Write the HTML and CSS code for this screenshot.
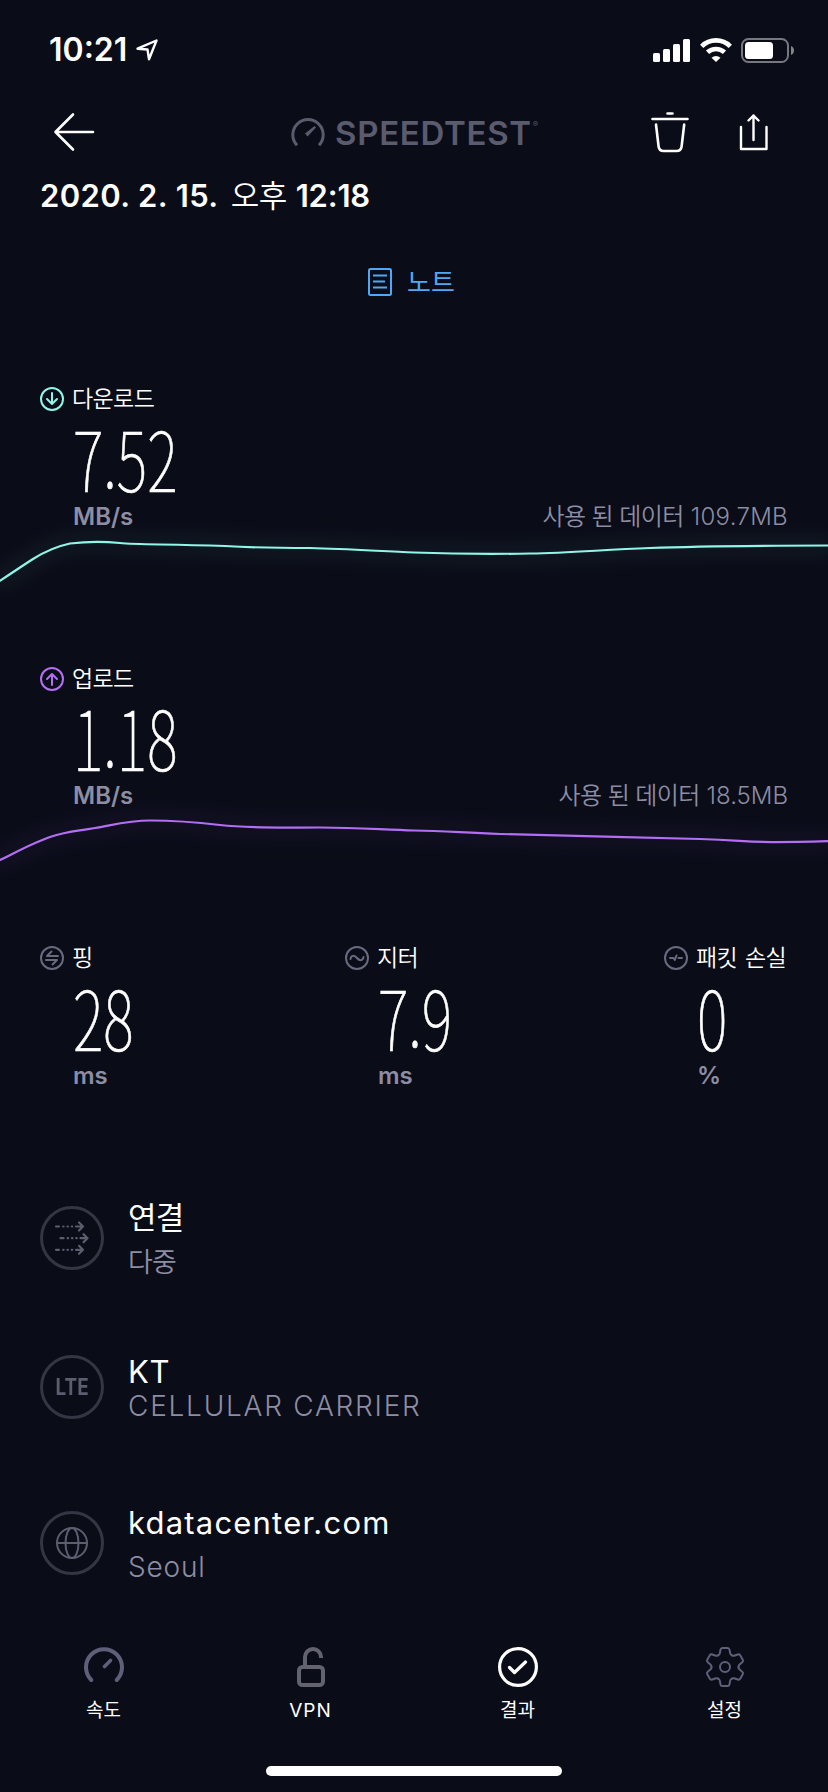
FILE: index.html
```html
<!DOCTYPE html>
<html lang="ko">
<head>
<meta charset="utf-8">
<meta name="viewport" content="width=device-width">
<title>Speedtest</title>
<link rel="stylesheet" href="styles.css">
</head>
<body>
<div class="screen">
  <header class="status">
    <div class="status-left">
      <span class="clock">10:21</span>
      <svg class="locate" width="24" height="24" viewBox="0 0 24 24"><path d="M2.500 10.700L21.500 2.500L14 21.300L12.500 11.500Z" fill="none" stroke="#fff" stroke-width="2.400" stroke-linejoin="round"/></svg>
    </div>
    <svg width="144" height="28" viewBox="0 0 144 28">
      <g fill="#fff">
        <rect x="1" y="17" width="7" height="9" rx="1.500"/><rect x="11" y="13" width="7" height="13" rx="1.500"/><rect x="21" y="8" width="7" height="18" rx="1.500"/><rect x="31" y="3" width="7" height="23" rx="1.500"/>
        <path d="M64 26l-4.500-4.300a6.500 6.500 0 0 1 9 0z"/>
        <rect x="93" y="6" width="28" height="17" rx="3.500"/>
      </g>
      <g fill="none" stroke="#fff" stroke-width="4.600"><path d="M49.700 10.300a20.300 20.300 0 0 1 28.600 0"/><path d="M55.500 16.300a12.500 12.500 0 0 1 17 0"/></g>
      <rect x="90" y="3" width="46" height="23" rx="6.500" fill="none" stroke="#77787f" stroke-width="2"/>
      <path d="M139 10c4 1.500 4 7.500 0 9z" fill="#84858b"/>
    </svg>
  </header>

  <nav class="topbar">
    <svg width="42" height="42" viewBox="0 0 42 42" fill="none" stroke="#fff" stroke-width="2.600" stroke-linecap="round" stroke-linejoin="round"><path d="M20 3.500L2.500 21L20 38.500M2.500 21H40"/></svg>
    <div class="brand">
      <svg width="36" height="32" viewBox="0 0 36 32" fill="none" stroke="#5b5b6e" stroke-width="3"><path d="M7 28.300a15.200 15.200 0 1 1 22 0"/><path d="M15 16.500L24.500 9l1.500 1.500L17.500 19.500z" fill="#5b5b6e" stroke="none"/></svg>
      <span class="wordmark">SPEEDTEST</span><span class="reg">®</span>
    </div>
    <div class="actions">
      <svg width="40" height="42" viewBox="0 0 40 42" fill="none" stroke="#fff" stroke-width="2.600" stroke-linecap="round"><path d="M17.500 2.500h5M2.500 8h35M6 13.500l2.600 22q.6 4.500 5 4.500h13q4.400 0 5-4.500l2.600-22"/></svg>
      <svg width="30" height="38" viewBox="0 0 30 38" fill="none" stroke="#fff" stroke-width="2.400" stroke-linecap="round" stroke-linejoin="round"><path d="M2 14v22h25.500V14M14.500 27V2.500M9.500 7.500l5-5 5 5"/></svg>
    </div>
  </nav>

  <h1 class="date"><span class="d1">2020. 2. 15.</span><span class="ampm">오후</span><span class="d2">12:18</span></h1>

  <div class="note">
    <svg width="24" height="28" viewBox="0 0 24 28" fill="none" stroke="#4fa8f5" stroke-width="2"><rect x="1" y="1" width="22" height="26" rx="1.500"/><path d="M5 7.500h14M5 13.500h12M5 19.500h14"/></svg>
    <span>노트</span>
  </div>

  <section class="metric download">
    <div class="label"><svg class="ico" viewBox="0 0 24 24" stroke="#8ff6e8"><circle cx="12" cy="12" r="11"/><path d="M12 6v10.500M7 12l5 5 5-5"/></svg><span>다운로드</span></div>
    <div class="value"><span>7<i class="dot">.</i>52</span></div>
    <div class="foot"><span class="unit">MB/s</span><span class="used"><b>사용 된 데이터</b> 109.7MB</span></div>
    <svg class="chart" width="828" height="80" viewBox="0 526 828 80" fill="none" stroke="#8ff6e8">
      <path class="glow" d="M-5 584C12 573 22 566 33 559S56 546.500 70 543.500C90 541 105 541.500 120 543S150 544 225 546C250 547.500 270 548 310 548C350 549 385 551.500 414 552.500S490 554.200 530 553.500S600 550 650 548S730 545.600 833 545.500"/>
      <path d="M-5 584C12 573 22 566 33 559S56 546.500 70 543.500C90 541 105 541.500 120 543S150 544 225 546C250 547.500 270 548 310 548C350 549 385 551.500 414 552.500S490 554.200 530 553.500S600 550 650 548S730 545.600 833 545.500"/>
    </svg>
  </section>

  <section class="metric upload">
    <div class="label"><svg class="ico" viewBox="0 0 24 24" stroke="#b46ef5"><circle cx="12" cy="12" r="11"/><path d="M12 18V7.500M7 12l5-5 5 5"/></svg><span>업로드</span></div>
    <div class="value"><span>1<i class="dot">.</i>18</span></div>
    <div class="foot"><span class="unit">MB/s</span><span class="used"><b>사용 된 데이터</b> 18.5MB</span></div>
    <svg class="chart" width="828" height="80" viewBox="0 805 828 80" fill="none" stroke="#b46ef5">
      <path class="glow" d="M-5 862.500C12 854.500 32 843 50 837S75 831.500 95 828S130 820.500 150 820.500S190 821.500 220 825S280 827.500 320 827.500S385 830 414 830.500S460 832.500 500 834S640 837 700 839S745 843.500 833 841"/>
      <path d="M-5 862.500C12 854.500 32 843 50 837S75 831.500 95 828S130 820.500 150 820.500S190 821.500 220 825S280 827.500 320 827.500S385 830 414 830.500S460 832.500 500 834S640 837 700 839S745 843.500 833 841"/>
    </svg>
  </section>

  <section class="trio">
    <div class="metric">
      <div class="label"><svg class="ico" viewBox="0 0 24 24" stroke="#696a7f"><circle cx="12" cy="12" r="11"/><path d="M18 10H7l4.500-4.500M6 14h11l-4.500 4.500"/></svg><span>핑</span></div>
      <div class="value"><span>28</span></div>
      <div class="foot"><span class="unit">ms</span></div>
    </div>
    <div class="metric">
      <div class="label"><svg class="ico" viewBox="0 0 24 24" stroke="#696a7f"><circle cx="12" cy="12" r="11"/><path d="M5.500 13c.5-4 4-4 6.500-1s6 3 6.500-1"/></svg><span>지터</span></div>
      <div class="value"><span>7<i class="dot">.</i>9</span></div>
      <div class="foot"><span class="unit">ms</span></div>
    </div>
    <div class="metric">
      <div class="label"><svg class="ico" viewBox="0 0 24 24" stroke="#696a7f"><circle cx="12" cy="12" r="11"/><path d="M6 12h3.500l1.300 2 1.700-4.500M14.500 12H18"/></svg><span>패킷 손실</span></div>
      <div class="value"><span>0</span></div>
      <div class="foot"><span class="unit pct">%</span></div>
    </div>
  </section>

  <section class="details">
    <div class="row conn">
      <div class="ring"><svg width="36" height="36" viewBox="-18 -18 36 36" fill="none" stroke="#5c5d6e" stroke-width="2.200" stroke-linecap="round" stroke-linejoin="round">
        <g id="arrow"><path d="M-16 -11.500h3M-8.800 -11.500h.4M-4.500 -11.500h.4M-.2 -11.500h.4M4 -11.500h7M7 -15.500l4 4-4 4"/></g>
        <use href="#arrow" x="4.500" y="11.700"/><use href="#arrow" y="23.300"/>
      </svg></div>
      <div class="info"><div class="title">연결</div><div class="sub">다중</div></div>
    </div>
    <div class="row carrier">
      <div class="ring"><span class="lte">LTE</span></div>
      <div class="info"><div class="title">KT</div><div class="sub">CELLULAR CARRIER</div></div>
    </div>
    <div class="row server">
      <div class="ring"><svg width="32" height="32" viewBox="0 0 32 32" fill="none" stroke="#5c5d6e" stroke-width="2"><circle cx="16" cy="16" r="15"/><ellipse cx="16" cy="16" rx="6.500" ry="15"/><path d="M1 16h30"/></svg></div>
      <div class="info"><div class="title">kdatacenter.com</div><div class="sub">Seoul</div></div>
    </div>
  </section>

  <nav class="tabs">
    <div class="tab"><svg width="40" height="40" viewBox="0 0 40 40" fill="none" stroke="#5f5f7a" stroke-width="4" stroke-linecap="round"><path d="M7.300 33a18 18 0 1 1 25.400 0"/><path d="M20.500 19.500l6-6" stroke-width="3.600"/></svg><span>속도</span></div>
    <div class="tab"><svg width="40" height="40" viewBox="0 0 40 40" fill="none" stroke="#63636f" stroke-width="4"><rect x="8" y="20" width="24" height="18" rx="3.500"/><path d="M14 20v-10a8 8 0 0 1 16 0v1"/></svg><span class="latin">VPN</span></div>
    <div class="tab"><svg width="40" height="40" viewBox="0 0 40 40" fill="none" stroke="#fff" stroke-width="3.200" stroke-linecap="round" stroke-linejoin="round"><circle cx="20" cy="20" r="18.400"/><path d="M11.500 20.500l5 5 11-10.500"/></svg><span>결과</span></div>
    <div class="tab"><svg width="40" height="40" viewBox="-20 -20 40 40" fill="none" stroke="#5f5f7a" stroke-width="2" stroke-linecap="round"><g id="cog"><path d="M-6.800 -11.800L-6.300 -12Q-5.400 -12.500 -5.200 -13.600L-4.500 -17.300Q-4.200 -19 -2.600 -19H2.600Q4.200 -19 4.500 -17.300L5.200 -13.600Q5.400 -12.500 6.300 -12L6.800 -11.800"/></g><use href="#cog" transform="rotate(60)"/><use href="#cog" transform="rotate(120)"/><use href="#cog" transform="rotate(180)"/><use href="#cog" transform="rotate(240)"/><use href="#cog" transform="rotate(300)"/><circle r="5"/></svg><span>설정</span></div>
  </nav>
  <div class="home"></div>
</div>
</body>
</html>
```
FILE: styles.css
```css
* { box-sizing: border-box; }
body { margin: 0; background: #0a0c18; }
svg { display: block; flex: none; overflow: visible; }
.screen {
  width: 828px;
  height: 1792px;
  overflow: hidden;
  display: flex;
  flex-direction: column;
  background: #0a0c18;
  color: #fff;
  font-family: Inter, "Noto Sans CJK KR", sans-serif;
  white-space: nowrap;
}
.status {
  height: 99px;
  padding: 0 32px 0 49px;
  display: flex;
  align-items: center;
  justify-content: space-between;
}
.status-left { display: flex; align-items: center; gap: 8px; }
.clock { width: 78px; font-size: 32px; font-weight: 600; line-height: 40px; letter-spacing: 0; }

.topbar {
  height: 66px;
  padding: 0 59px 0 53px;
  display: grid;
  grid-template-columns: 237px 1fr auto;
  align-items: center;
}
.brand { display: flex; align-items: center; color: #5b5b6e; padding-top: 2px; }
.wordmark { margin-left: 9px; font-size: 33px; font-weight: 600; line-height: 36px; letter-spacing: 0.7px; }
.reg { font-size: 8px; line-height: 8px; align-self: flex-start; margin: 5px 0 0 1px; }
.actions { display: flex; align-items: center; gap: 49px; }

.date {
  margin: 0;
  height: 62px;
  padding-left: 40px;
  display: flex;
  font-size: 31px;
  font-weight: 600;
  line-height: 62px;
  letter-spacing: 0.4px;
}
.ampm { font-weight: 350; font-size: 31px; margin: 0 9px 0 12px; letter-spacing: -0.5px; }
.d2 { letter-spacing: -0.2px; }

.note {
  height: 110px;
  padding-left: 368px;
  display: flex;
  align-items: center;
  gap: 15px;
  color: #4fa8f5;
  font-size: 26px;
}
.note span { padding-bottom: 4px; font-weight: 400; }

.metric { padding-top: 50px; }
.download { height: 280px; }
.upload { height: 279px; }
.download, .upload { flex: none; }
.label { height: 24px; padding-left: 40px; display: flex; align-items: center; gap: 8px; font-size: 23px; font-weight: 350; letter-spacing: -0.6px; word-spacing: 2px; line-height: 24px; }
.ico { width: 24px; height: 24px; fill: none; stroke-width: 2; stroke-linecap: round; stroke-linejoin: round; }
.value { height: 92px; margin-top: 4px; padding-left: 73px; font-family: "Noto Sans CJK KR", sans-serif; font-weight: 100; font-size: 82px; line-height: 92px; }
.upload .value { margin-top: 3px; }
.value span { display: inline-block; transform: translateY(-4px) scaleX(0.71); transform-origin: 0 50%; -webkit-text-stroke: 0.7px #fff; }
.dot { font-style: normal; }
.foot { height: 19px; padding: 0 40px 0 73px; display: flex; justify-content: space-between; line-height: 19px; font-size: 24px; color: #8d8da3; }
.unit { font-weight: 600; }
.used { font-weight: 350; }
.used b { font-weight: 350; letter-spacing: -0.6px; }
.download .used { letter-spacing: 0.3px; }
.chart { stroke-width: 2.2; }
.glow { stroke-width: 24; opacity: 0.045; filter: blur(9px); }

.trio { height: 297px; display: flex; flex: none; }
.trio .metric:nth-child(1) { width: 305px; }
.trio .metric:nth-child(2) { width: 319px; }
.trio .foot { padding-right: 0; }

.row { height: 90px; padding-left: 40px; display: flex; align-items: center; gap: 24px; }
.carrier { margin-top: 59px; }
.server { margin-top: 66px; }
.ring { width: 64px; height: 64px; border: 3px solid #343644; border-radius: 50%; display: flex; align-items: center; justify-content: center; }
.lte { font-size: 23px; font-weight: 700; color: #5c5d6e; line-height: 24px; transform: scaleX(0.82); }
.info { padding-top: 3px; }
.title { font-size: 31px; line-height: 45px; font-weight: 400; }
.sub { font-size: 28px; line-height: 45px; color: #8d8da3; font-weight: 350; }
.conn .title { letter-spacing: -0.8px; }
.conn .sub { font-size: 27px; letter-spacing: -0.8px; }
.carrier .title, .carrier .sub { line-height: 35px; }
.carrier .title { letter-spacing: 0.6px; }
.carrier .sub { letter-spacing: 1.75px; }
.server .title, .server .sub { line-height: 44px; }
.server .title { letter-spacing: 1.2px; }
.server .sub { letter-spacing: 0.8px; }

.tabs { height: 178px; padding-top: 59px; display: grid; grid-template-columns: repeat(4, 207px); flex: none; }
.tab { display: flex; flex-direction: column; align-items: center; gap: 12px; font-size: 19px; line-height: 24px; }
.latin { letter-spacing: 0.9px; font-weight: 400; }
.home { width: 296px; height: 10px; flex: none; margin: 0 auto; border-radius: 5px; background: #fff; }
```
